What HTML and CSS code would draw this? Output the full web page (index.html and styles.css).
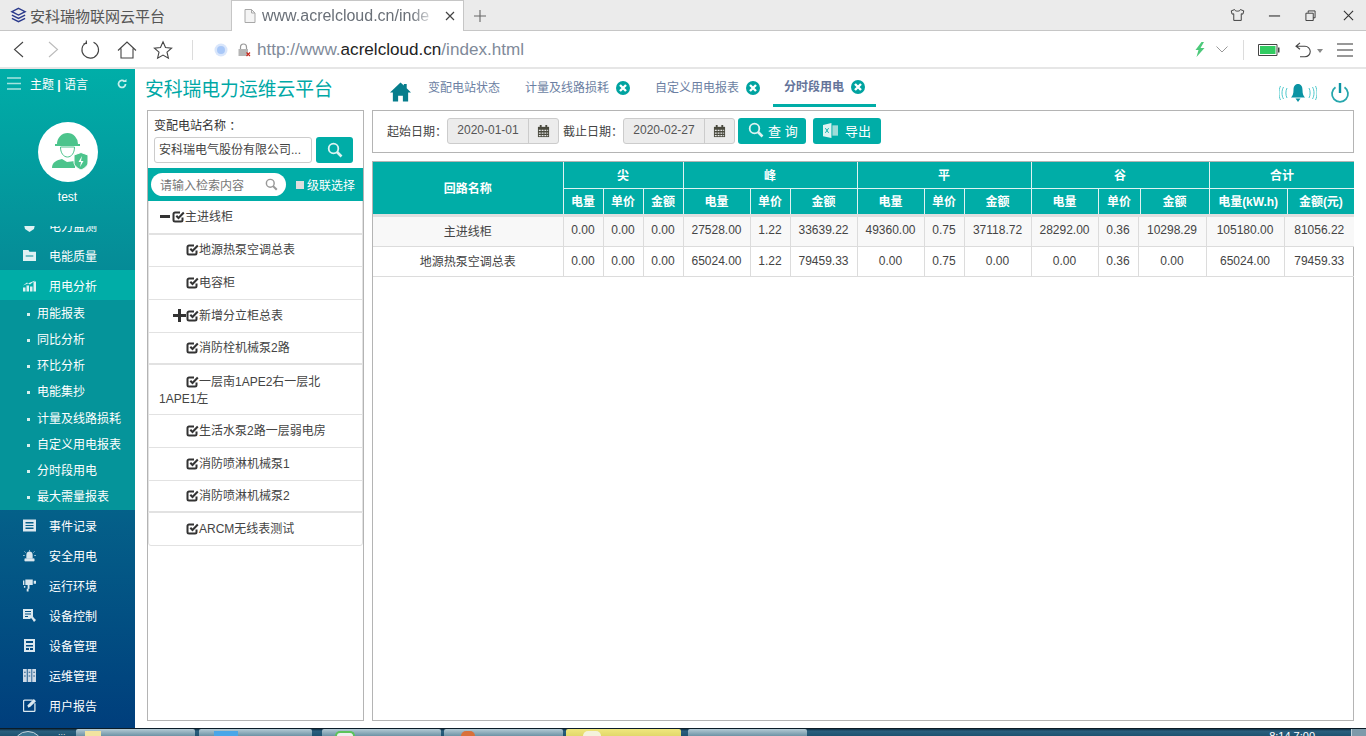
FILE: index.html
```html
<!DOCTYPE html>
<html>
<head>
<meta charset="utf-8">
<title>安科瑞物联网云平台</title>
<link rel="stylesheet" href="styles.css">
</head>
<body>
<svg class="defs" width="0" height="0">
	<symbol id="chk" viewBox="0 0 13 13">
		<path d="M10.500 7.500v2.500a1.500 1.500 0 0 1-1.500 1.500H3A1.500 1.500 0 0 1 1.500 10V4A1.500 1.500 0 0 1 3 2.500h5" fill="none" stroke="currentColor" stroke-width="2"/>
		<path d="M4.300 5.700l2.200 2.200L11.800 2.600" fill="none" stroke="currentColor" stroke-width="2.100"/>
	</symbol>
	<symbol id="cal" viewBox="0 0 14 14">
		<path d="M1 2h12v11H1z" fill="#4a4a3e"/>
		<path d="M3 0h2v3H3zM9 0h2v3H9z" fill="#4a4a3e"/>
		<path d="M2 5h2v1.500H2zM5 5h2v1.500H5zM8 5h2v1.500H8zM11 5h1v1.500h-1zM2 8h2v1.500H2zM5 8h2v1.500H5zM8 8h2v1.500H8zM11 8h1v1.500h-1zM2 10.700h2v1.300H2zM5 10.700h2v1.300H5zM8 10.700h2v1.300H8zM11 10.700h1v1.300h-1z" fill="#e8e8e8"/>
	</symbol>
	<symbol id="mag" viewBox="0 0 16 16">
		<circle cx="6.500" cy="6.500" r="4.800" fill="none" stroke="currentColor" stroke-width="1.800"/>
		<path d="M10 10l4.500 4.500" stroke="currentColor" stroke-width="2.600"/>
	</symbol>
	<symbol id="closex" viewBox="0 0 14 14">
		<circle cx="7" cy="7" r="7" fill="#00a3a0"/>
		<path d="M4 4l6 6M10 4l-6 6" stroke="#fff" stroke-width="2.400"/>
	</symbol>
</svg>

<div class="tabbar">
	<div class="tab">
		<svg class="tab_logo" viewBox="0 0 18 18"><path d="M9 1.500L16 5 9 8.500 2 5z" fill="none" stroke="#2b3a8c" stroke-width="1.500"/><path d="M2 8.500l7 3.500 7-3.500M2 12l7 3.500L16 12" fill="none" stroke="#2b3a8c" stroke-width="1.500"/></svg>
		<span>安科瑞物联网云平台</span>
	</div>
	<div class="tab tab_on">
		<svg class="tab_page" viewBox="0 0 12 14"><path d="M1 .5h6.500L11 4v9.500H1z" fill="#f4f4f4" stroke="#a8a8a8"/><path d="M7.500 .5V4H11" fill="none" stroke="#a8a8a8"/></svg>
		<span class="tab_url">www.acrelcloud.cn/inde</span>
		<svg class="tab_x" viewBox="0 0 10 10"><path d="M1 1l8 8M9 1L1 9" stroke="#444" stroke-width="1.200"/></svg>
	</div>
	<svg class="tab_plus" viewBox="0 0 14 14"><path d="M7 1v12M1 7h12" stroke="#666" stroke-width="1.100"/></svg>
	<div class="win_btns">
		<svg viewBox="0 0 18 16" class="w_shirt"><path d="M5.500 1.500L1.500 3l1 4 2-.5v8h9v-8l2 .5 1-4-4-1.500c-.5 2.500-6.500 2.500-7 0z" fill="none" stroke="#333" stroke-width="1.100"/></svg>
		<svg viewBox="0 0 14 14" class="w_min"><path d="M1 7.500h12" stroke="#333" stroke-width="1.200"/></svg>
		<svg viewBox="0 0 12 12" class="w_max"><path d="M3.500 3V1h7.500v7.500H9" fill="none" stroke="#333"/><path d="M1 3.500h8v8H1z" fill="none" stroke="#333"/></svg>
		<svg viewBox="0 0 12 12" class="w_close"><path d="M1 1l10 10M11 1L1 11" stroke="#333" stroke-width="1.200"/></svg>
	</div>
</div>

<div class="toolbar">
	<svg class="t_back" viewBox="0 0 11 17"><path d="M10 1L1.500 8.500 10 16" fill="none" stroke="#444" stroke-width="1.100"/></svg>
	<svg class="t_fwd" viewBox="0 0 11 17"><path d="M1 1l8.500 7.500L1 16" fill="none" stroke="#bbb" stroke-width="1.100"/></svg>
	<svg class="t_reload" viewBox="0 0 20 20"><path d="M6 2.700a8.300 8.300 0 1 0 7.500-.5M6.300 .5l.2 3-3 .2" fill="none" stroke="#444" stroke-width="1.100"/></svg>
	<svg class="t_home" viewBox="0 0 20 20"><path d="M1 10.500L10 2l9 8.500M4 8.500V18h12V8.500" fill="none" stroke="#444" stroke-width="1.100"/></svg>
	<svg class="t_star" viewBox="0 0 20 20"><path d="M10 1.800l2.500 5.700 6.100.6-4.600 4.100 1.400 6L10 15.100l-5.400 3.100 1.400-6-4.600-4.100 6.100-.6z" fill="none" stroke="#444" stroke-width="1.100"/></svg>
	<div class="t_sep"></div>
	<svg class="t_shield" viewBox="0 0 14 14"><circle cx="7" cy="7" r="6.500" fill="#d9e6fb"/><circle cx="7" cy="7" r="4" fill="#a9c8f8"/></svg>
	<svg class="t_lock" viewBox="0 0 14 14"><path d="M3.500 6V4a3 3 0 0 1 6 0v2" fill="none" stroke="#999" stroke-width="1.200"/><path d="M1.500 6h9.500v7H1.500z" fill="#b5b5b5"/><path d="M9.500 9.500l3.500 3.500M13 9.500L9.500 13" stroke="#c8281e" stroke-width="1.200"/></svg>
	<div class="url">http://www.<b>acrelcloud.cn</b>/index.html</div>
	<div class="t_right">
		<svg class="t_bolt" viewBox="0 0 10 15"><path d="M6.500 0L.5 8h3L1.500 15 9.500 6H5.500L9 0z" fill="#4cc97a"/></svg>
		<svg class="t_down" viewBox="0 0 12 7"><path d="M.5 .5L6 6l5.500-5.500" fill="none" stroke="#999"/></svg>
		<div class="t_sep t_sep2"></div>
		<svg class="t_batt" viewBox="0 0 22 12"><path d="M.5 .5h18.500v11H.5z" fill="none" stroke="#444"/><path d="M2 2h15.500v8H2z" fill="#32cc62"/><path d="M20 3.500h1.500v5H20z" fill="#444"/></svg>
		<svg class="t_undo" viewBox="0 0 16 16"><path d="M5 .8L1 4.300l4 3M1 4.300h9a4.800 4.800 0 0 1 0 10.500H5" fill="none" stroke="#444" stroke-width="1.100"/></svg>
		<svg class="t_caret" viewBox="0 0 6 4"><path d="M0 0h6L3 4z" fill="#888"/></svg>
		<svg class="t_menu" viewBox="0 0 16 14"><path d="M0 1h16M0 7h16M0 13h16" stroke="#333" stroke-width="1.100"/></svg>
	</div>
</div>

<div class="page">
	<div class="sidebar">
		<div class="side_top">
			<svg class="burger" viewBox="0 0 14 14"><path d="M0 1h14M0 6.500h14M0 12h14" stroke="#a6e4df" stroke-width="1.500"/></svg>
			<span class="theme">主题 <b>|</b> 语言</span>
			<svg class="refresh" viewBox="0 0 10 10"><path d="M8.500 5a3.500 3.500 0 1 1-1-2.500" fill="none" stroke="#c6efec" stroke-width="1.800"/><path d="M6 3h3.500V0z" fill="#c6efec"/></svg>
		</div>
		<div class="avatar">
			<svg viewBox="0 0 40 40" width="40" height="40">
				<path d="M9 12a10.500 11 0 0 1 21 0h2v2H7v-2z" fill="#4cc48c"/>
				<path d="M12.500 15h14c0 6-3 10-7 10s-7-4-7-10z" fill="none" stroke="#4cc48c" stroke-width="1"/>
				<path d="M4 36c0-6 5-8 10-9l5 3 8-1v7z" fill="#4cc48c"/>
				<path d="M26 23l7-2.500 7 2.500v7c0 4-3 6-7 8-4-2-7-4-7-8z" fill="#4cc48c" stroke="#fff"/>
				<path d="M34 24l-3.500 6h2.500l-1 5 3.500-6H33z" fill="#fff"/>
			</svg>
		</div>
		<div class="user">test</div>
		<div class="menu">
			<div class="item item_cut"><svg class="mi" viewBox="0 0 13 13"><path d="M0 1h13l-2 9-4.500 3L2 10z" fill="#dff1f3"/></svg>电力监测</div>
			<div class="item"><svg class="mi" viewBox="0 0 12 12"><path d="M0 1h5l1 1.500h6V11H0zM2.500 6h7v1h-7z" fill="#dff1f3" fill-rule="evenodd"/></svg>电能质量</div>
			<div class="item item_on"><svg class="mi" viewBox="0 0 13 12"><path d="M0 8h2.500v4H0zM3.500 6H6v6H3.500zM7 7h2.500v5H7zM10.500 2H13v10h-2.500zM0 6l4-3 3 2 5-4" fill="#dff1f3"/></svg>用电分析</div>
			<div class="subs">
				<div class="sub">用能报表</div>
				<div class="sub">同比分析</div>
				<div class="sub">环比分析</div>
				<div class="sub">电能集抄</div>
				<div class="sub">计量及线路损耗</div>
				<div class="sub">自定义用电报表</div>
				<div class="sub">分时段用电</div>
				<div class="sub">最大需量报表</div>
			</div>
			<div class="item"><svg class="mi" viewBox="0 0 13 12"><path d="M0 0h13v12H0zM2.500 2.500v1.500h8V2.500zM2.500 5.500v1h8v-1zM2.500 8v1.500h8V8z" fill="#dbe8ef" fill-rule="evenodd"/></svg>事件记录</div>
			<div class="item"><svg class="mi" viewBox="0 0 14 12"><path d="M4 5a3 3 0 0 1 6 0v4H4zM2 9.500h10V12H2zM7 0v1.500M1.500 1.500l1.500 1.500M12.500 1.500L11 3M0 6h2M12 6h2" fill="#dbe8ef" stroke="#dbe8ef" stroke-width=".7"/></svg>安全用电</div>
			<div class="item"><svg class="mi" viewBox="0 0 14 13"><path d="M0 1h1.500v5H0zM2.500 0h8v6h-8zM11.500 1.500H14v3h-2.500zM5 6h2v4H5zM4 10h2v3H4zM1 7h1.500v2H1z" fill="#dbe8ef"/></svg>运行环境</div>
			<div class="item"><svg class="mi" viewBox="0 0 13 13"><path d="M0 0h10v7l-3 3H0zM2 2v1h6V2zM2 4.500v1h6v-1zM2 7v1h3V7z" fill="#dbe8ef" fill-rule="evenodd"/><path d="M7 8l2-2 2 3 2 2-2 2-2-3z" fill="#dbe8ef"/></svg>设备控制</div>
			<div class="item"><svg class="mi" viewBox="0 0 11 13"><path d="M0 0h11v13H0zM2 2v2h7V2zM2 6v1.500h7V6zM2 9v2h3V9zM6 9v2h3V9z" fill="#dbe8ef" fill-rule="evenodd"/></svg>设备管理</div>
			<div class="item"><svg class="mi" viewBox="0 0 12 12"><path d="M0 0h3.500v12H0zM4.300 0h3.500v12H4.300zM8.500 0H12v12H8.500z" fill="#cdd9e6"/><path d="M1 3h1.500M5.200 3h1.500M9.500 3H11M1 6.500h1.500M5.200 6.500h1.500M9.500 6.500H11" stroke="#2a5d88"/></svg>运维管理</div>
			<div class="item"><svg class="mi" viewBox="0 0 12 12"><path d="M9 1H1.500a1 1 0 0 0-1 1v8.500a1 1 0 0 0 1 1H10a1 1 0 0 0 1-1V4" fill="none" stroke="#dbe8ef" stroke-width="1.200"/><path d="M4 6l1 2 2-1 5-5-2-2z" fill="#dbe8ef"/></svg>用户报告</div>
		</div>
	</div>

	<div class="left">
		<h1>安科瑞电力运维云平台</h1>
		<div class="tree_box">
			<div class="st_label">变配电站名称 ：</div>
			<div class="st_row">
				<div class="st_input">安科瑞电气股份有限公司...</div>
				<div class="st_btn"><svg viewBox="0 0 16 16"><use href="#mag"/></svg></div>
			</div>
			<div class="filter">
				<div class="filter_in"><span>请输入检索内容</span><svg viewBox="0 0 16 16"><use href="#mag"/></svg></div>
				<span class="filter_box"></span><span class="filter_txt">级联选择</span>
			</div>
			<div class="node"><svg class="fold" viewBox="0 0 13 13"><path d="M1 5h10v3H1z"/></svg><svg class="chk"><use href="#chk"/></svg>主进线柜</div>
			<div class="node node_thick"><span class="ind"></span><svg class="chk"><use href="#chk"/></svg>地源热泵空调总表</div>
			<div class="node"><span class="ind"></span><svg class="chk"><use href="#chk"/></svg>电容柜</div>
			<div class="node"><span class="ind2"></span><svg class="fold" viewBox="0 0 13 13"><path d="M5 0h3v5h5v3H8v5H5V8H0V5h5z"/></svg><svg class="chk"><use href="#chk"/></svg>新增分立柜总表</div>
			<div class="node node_short"><span class="ind"></span><svg class="chk"><use href="#chk"/></svg>消防栓机械泵2路</div>
			<div class="node node_thick node_wrap"><span class="ind"></span><svg class="chk"><use href="#chk"/></svg>一层南1APE2右一层北 1APE1左</div>
			<div class="node"><span class="ind"></span><svg class="chk"><use href="#chk"/></svg>生活水泵2路一层弱电房</div>
			<div class="node"><span class="ind"></span><svg class="chk"><use href="#chk"/></svg>消防喷淋机械泵1</div>
			<div class="node node_short"><span class="ind"></span><svg class="chk"><use href="#chk"/></svg>消防喷淋机械泵2</div>
			<div class="node node_thick node_last"><span class="ind"></span><svg class="chk"><use href="#chk"/></svg>ARCM无线表测试</div>
		</div>
	</div>

	<div class="main">
		<div class="tabs">
			<svg class="home" viewBox="0 0 22 20"><path d="M11 0L0 10.500h3V20h5.500v-6h5v6H19v-9.500h3L17.500 6V1.500h-3v1.800z" fill="#067d8c"/></svg>
			<div class="p_tab p_tab1">变配电站状态</div>
			<div class="p_tab p_tab2">计量及线路损耗<svg class="cx"><use href="#closex"/></svg></div>
			<div class="p_tab p_tab3">自定义用电报表<svg class="cx"><use href="#closex"/></svg></div>
			<div class="p_tab p_tab_on">分时段用电<svg class="cx"><use href="#closex"/></svg></div>
			<div class="tabs_r">
				<svg class="bell" viewBox="0 0 38 18"><path d="M19 0c-3 0-4.500 2.500-4.500 6 0 4-1 6-2.500 7.500h14C24.500 12 23.500 10 23.500 6c0-3.500-1.500-6-4.500-6zM16.500 14.500h5L19 18z" fill="#0a93a3"/><path d="M8 4c-1.500 3-1.500 7 0 10M4.500 3c-2 3.500-2 8.500 0 12M1.500 2c-2 4-2 10 0 14M30 4c1.500 3 1.500 7 0 10M33.500 3c2 3.500 2 8.500 0 12M36.500 2c2 4 2 10 0 14" fill="none" stroke="#4fc9cc" stroke-width="1"/></svg>
				<svg class="power" viewBox="0 0 20 20"><path d="M5.500 4.300a8 8 0 1 0 9 0" fill="none" stroke="#26a7ad" stroke-width="1.800"/><path d="M8.800 0h2.400v10H8.800z" fill="#0a93a3"/></svg>
			</div>
		</div>
		<div class="query">
			<span class="q_lab">起始日期：</span>
			<div class="date"><span>2020-01-01</span><i><svg viewBox="0 0 14 14"><use href="#cal"/></svg></i></div>
			<span class="q_lab q_lab2">截止日期：</span>
			<div class="date"><span>2020-02-27</span><i><svg viewBox="0 0 14 14"><use href="#cal"/></svg></i></div>
			<div class="btn btn_q"><svg viewBox="0 0 16 16"><use href="#mag"/></svg>查 询</div>
			<div class="btn btn_x">
				<svg viewBox="0 0 16 16"><path d="M0 2l9-2v16l-9-2z" fill="#dff3f2"/><path d="M10 2.500h6v11h-6z" fill="#9fdcd8"/><path d="M2.500 5.500l3.500 5M6 5.500l-3.500 5" stroke="#00ada7" stroke-width="1"/></svg>
				导出
			</div>
		</div>
		<div class="report">
			<table class="thead">
				<colgroup><col><col><col><col><col><col><col><col><col><col><col><col><col><col><col></colgroup>
				<tr class="top">
					<th rowspan="2" class="name">回路名称</th>
					<th colspan="3">尖</th>
					<th colspan="3">峰</th>
					<th colspan="3">平</th>
					<th colspan="3">谷</th>
					<th colspan="2">合计</th>
				</tr>
				<tr>
					<th>电量</th><th>单价</th><th>金额</th>
					<th>电量</th><th>单价</th><th>金额</th>
					<th>电量</th><th>单价</th><th>金额</th>
					<th>电量</th><th>单价</th><th>金额</th>
					<th>电量(kW.h)</th><th>金额(元)</th>
				</tr>
			</table>
			<table class="tbody">
				<colgroup><col><col><col><col><col><col><col><col><col><col><col><col><col><col><col></colgroup>
				<tr class="odd">
					<td>主进线柜</td><td>0.00</td><td>0.00</td><td>0.00</td>
					<td>27528.00</td><td>1.22</td><td>33639.22</td>
					<td>49360.00</td><td>0.75</td><td>37118.72</td>
					<td>28292.00</td><td>0.36</td><td>10298.29</td>
					<td>105180.00</td><td>81056.22</td>
				</tr>
				<tr>
					<td>地源热泵空调总表</td><td>0.00</td><td>0.00</td><td>0.00</td>
					<td>65024.00</td><td>1.22</td><td>79459.33</td>
					<td>0.00</td><td>0.75</td><td>0.00</td>
					<td>0.00</td><td>0.36</td><td>0.00</td>
					<td>65024.00</td><td>79459.33</td>
				</tr>
			</table>
		</div>
	</div>
</div>

<div class="taskbar">
	<div class="orb"></div>
	<div class="dots">...</div>
	<div class="task task1"><i class="t_ico ico_folder"></i></div>
	<div class="task task2"><i class="t_ico ico_blue"></i></div>
	<div class="task task3"><i class="t_ico ico_green"></i></div>
	<div class="task task4"><i class="t_ico ico_orange"></i></div>
	<div class="task task5"><i class="t_ico ico_white"></i></div>
	<div class="task task6"></div>
	<div class="clock">8:14 7:00</div>
	<div class="showdesk"></div>
</div>
</body>
</html>
```

FILE: styles.css
```css
* {
	box-sizing: border-box;
}
html, body {
	margin: 0;
	height: 736px;
	overflow: hidden;
}
body {
	font-family: "Liberation Sans", "Noto Sans CJK SC", sans-serif;
	font-size: 12px;
	color: #333;
	background: #fff;
}
.defs {
	display: block;
	height: 0;
}

/* browser tabs */
.tabbar {
	height: 31px;
	background: #ebebeb;
	border-bottom: 1px solid #c6c6c6;
	display: flex;
	align-items: stretch;
}
.tab {
	width: 231px;
	display: flex;
	align-items: center;
	padding-left: 10px;
	font-size: 15px;
	color: #555;
}
.tab_logo {
	width: 17px;
	height: 17px;
	margin-right: 3px;
}
.tab_on {
	width: 233px;
	height: 31px;
	background: #fff;
	border: 1px solid #c6c6c6;
	border-bottom: 0;
	padding-left: 12px;
}
.tab_page {
	width: 12px;
	height: 14px;
	margin-right: 6px;
}
.tab_url {
	width: 175px;
	overflow: hidden;
	white-space: nowrap;
	font-size: 16px;
	color: #6a7078;
	-webkit-mask-image: linear-gradient(90deg, #000 85%, transparent 100%);
	mask-image: linear-gradient(90deg, #000 85%, transparent 100%);
}
.tab_x {
	width: 10px;
	height: 10px;
	margin-left: 8px;
}
.tab_plus {
	width: 14px;
	height: 14px;
	margin: 9px 0 0 9px;
}
.win_btns {
	margin-left: auto;
	display: flex;
	align-items: center;
	padding-right: 12px;
}
.w_shirt {
	width: 15px;
	height: 14px;
	margin-right: 23px;
}
.w_min {
	width: 13px;
	height: 13px;
	margin-right: 24px;
}
.w_max {
	width: 11px;
	height: 11px;
	margin-right: 27px;
}
.w_close {
	width: 11px;
	height: 11px;
}

/* browser toolbar */
.toolbar {
	height: 38px;
	border-bottom: 2px solid #e6e6e6;
	display: flex;
	align-items: center;
	padding: 1px 0 0 13px;
}
.toolbar svg {
	flex: none;
}
.t_back, .t_fwd {
	width: 11px;
	height: 17px;
}
.t_fwd {
	margin-left: 24px;
}
.t_reload {
	width: 20px;
	height: 20px;
	margin-left: 21px;
}
.t_home {
	width: 20px;
	height: 20px;
	margin-left: 17px;
}
.t_star {
	width: 20px;
	height: 20px;
	margin-left: 16px;
}
.t_sep {
	width: 1px;
	height: 20px;
	background: #dcdcdc;
	margin-left: 19px;
}
.t_shield {
	width: 14px;
	height: 14px;
	margin-left: 21px;
}
.t_lock {
	width: 14px;
	height: 14px;
	margin-left: 9px;
}
.url {
	margin-left: 6px;
	font-size: 17.100px;
	color: #808a99;
}
.url b {
	font-weight: normal;
	color: #222;
}
.t_right {
	margin-left: auto;
	display: flex;
	align-items: center;
	padding-right: 13px;
}
.t_bolt {
	width: 10px;
	height: 15px;
}
.t_down {
	width: 12px;
	height: 7px;
	margin-left: 11px;
}
.t_sep2 {
	margin-left: 15px;
}
.t_batt {
	width: 22px;
	height: 12px;
	margin-left: 14px;
}
.t_undo {
	width: 16px;
	height: 16px;
	margin-left: 15px;
}
.t_caret {
	width: 6px;
	height: 4px;
	margin: 2px 0 0 6px;
}
.t_menu {
	width: 16px;
	height: 14px;
	margin-left: 14px;
}

/* page */
.page {
	height: 659px;
	display: flex;
}
.sidebar {
	width: 135px;
	flex: none;
	color: #fff;
	background: linear-gradient(180deg, #00aea8 0%, #058e98 28%, #05688c 60%, #003e7c 100%);
	display: flex;
	flex-direction: column;
}
.side_top {
	height: 31px;
	display: flex;
	align-items: center;
	padding: 0 8px 2px 7px;
}
.burger {
	width: 14px;
	height: 14px;
}
.theme {
	margin-left: 9px;
}
.refresh {
	width: 10px;
	height: 10px;
	margin-left: auto;
}
.avatar {
	width: 60px;
	height: 60px;
	margin: 22px auto 0;
	background: #fff;
	border-radius: 50%;
	display: flex;
	align-items: center;
	justify-content: center;
}
.user {
	text-align: center;
	margin-top: 7px;
	height: 17px;
	line-height: 17px;
}
.menu {
	height: 502px;
	margin-top: 20px;
	overflow: hidden;
}
.item {
	height: 30px;
	display: flex;
	align-items: center;
	padding-left: 23px;
}
.item_cut {
	margin-top: -16px;
}
.mi {
	width: 13px;
	height: 13px;
	margin-right: 13px;
	flex: none;
}
.item_on {
	background: #00ada7;
	box-shadow: 0 2px 2px #058191;
}
.subs {
	background: #05949a;
	height: 210px;
	padding-top: 1px;
}
.sub {
	height: 26.150px;
	line-height: 26px;
	padding-left: 37px;
	position: relative;
}
.sub:before {
	content: "";
	position: absolute;
	left: 27px;
	top: 12px;
	width: 3px;
	height: 3px;
	background: #d6f0ee;
}

/* tree */
.left {
	width: 229px;
	flex: none;
	padding-left: 12px;
}
h1 {
	margin: 8px 0 0 -2px;
	height: 33px;
	font-size: 18.800px;
	font-weight: normal;
	color: #00a8a6;
	line-height: 26px;
}
.tree_box {
	width: 217px;
	height: 611px;
	border: 1px solid #b4b4b4;
	background: #fff;
}
.st_label {
	margin: 7px 0 0 6px;
	height: 17px;
	line-height: 17px;
}
.st_row {
	display: flex;
	margin: 2px 0 5px 6px;
}
.st_input {
	width: 158px;
	height: 26px;
	line-height: 24px;
	border: 1px solid #ccc;
	border-radius: 3px;
	padding-left: 4px;
	white-space: nowrap;
	overflow: hidden;
	color: #444;
}
.st_btn {
	width: 37px;
	height: 26px;
	margin-left: 4px;
	background: #00ada7;
	border-radius: 3px;
	color: #dff3f2;
	display: flex;
	align-items: center;
	justify-content: center;
}
.st_btn svg {
	width: 16px;
	height: 16px;
}
.filter {
	height: 33px;
	background: #00ada7;
	display: flex;
	align-items: center;
	padding-left: 3px;
	color: #fff;
}
.filter_in {
	width: 135px;
	height: 23px;
	background: #fff;
	border-radius: 12px;
	display: flex;
	align-items: center;
	padding: 0 8px 1px 9px;
	color: #777;
}
.filter_in svg {
	width: 13px;
	height: 13px;
	margin-left: auto;
	color: #999;
}
.filter_box {
	width: 8px;
	height: 8px;
	background: #dedede;
	margin: 0 3px 0 10px;
}
.node {
	height: 33px;
	line-height: 32px;
	border: 1px solid #e2e2e2;
	border-top: 0;
	padding: 0 15px 0 10px;
	color: #444;
}
.node_thick {
	border-top: 1px solid #e2e2e2;
	line-height: 31px;
}
.node_short {
	height: 31px;
	line-height: 30px;
}
.node_wrap {
	height: 51px;
	line-height: 17px;
	padding-top: 9px;
}
.node_last {
	height: 34px;
	line-height: 32px;
	border-radius: 0 0 3px 3px;
}
.ind {
	display: inline-block;
	width: 27px;
}
.ind2 {
	display: inline-block;
	width: 14px;
}
.fold {
	width: 13px;
	height: 13px;
	vertical-align: -2px;
	fill: #333;
}
.chk {
	width: 13px;
	height: 13px;
	vertical-align: -2px;
	color: #333;
}

/* right part */
.main {
	flex: 1;
	min-width: 0;
	padding: 0 12px 0 8px;
}
.tabs {
	height: 41px;
	display: flex;
	align-items: flex-start;
	color: #6c7fa3;
}
.home {
	width: 21px;
	height: 20px;
	margin: 13px 0 0 18px;
	flex: none;
}
.p_tab {
	height: 38px;
	line-height: 36px;
	padding: 0 11px;
	display: flex;
	align-items: center;
	white-space: nowrap;
}
.p_tab1 {
	margin: 0 3px 0 6px;
}
.p_tab2 {
	margin-right: 3px;
}
.p_tab3 {
	margin-right: 2px;
}
.p_tab .cx {
	width: 14px;
	height: 14px;
	margin-left: 7px;
}
.p_tab_on {
	font-weight: bold;
	border-bottom: 3px solid #00ada7;
	color: #64749a;
}
.tabs_r {
	margin-left: auto;
	display: flex;
	align-items: center;
	padding: 14px 4px 0 0;
}
.bell {
	width: 38px;
	height: 18px;
}
.power {
	width: 20px;
	height: 20px;
	margin-left: 13px;
}
.query {
	height: 43px;
	border: 1px solid #b4b4b4;
	display: flex;
	align-items: center;
	padding: 0 0 0 14px;
}
.q_lab {
	color: #444;
	margin-top: -2px;
}
.q_lab2 {
	margin-left: 4px;
}
.date {
	width: 112px;
	height: 26px;
	display: flex;
	background: #ececec;
	border: 1px solid #ccc;
	border-radius: 3px;
	color: #555;
	margin-top: -1px;
}
.date span {
	width: 80px;
	text-align: center;
	line-height: 22px;
}
.date i {
	flex: 1;
	border-left: 1px solid #ccc;
	display: flex;
	align-items: center;
	justify-content: center;
}
.date svg {
	width: 13px;
	height: 13px;
}
.btn {
	height: 26px;
	margin-top: -1px;
	background: #00ada7;
	border-radius: 3px;
	color: #fff;
	font-size: 13px;
	display: flex;
	align-items: center;
	margin-left: 7px;
	padding: 0 0 2px 10px;
}
.btn_q {
	width: 68px;
	margin-left: 3px;
}
.btn_q svg {
	width: 16px;
	height: 16px;
	margin-right: 4px;
	color: #dff3f2;
}
.btn_x {
	width: 68px;
}
.btn_x svg {
	width: 15px;
	height: 15px;
	margin-right: 7px;
}
.report {
	height: 560px;
	margin-top: 8px;
	border: 1px solid #b4b4b4;
}
table {
	border-collapse: collapse;
	table-layout: fixed;
	width: 981px;
}
.thead th {
	height: 26.500px;
	padding: 0 0 2px;
	background: #00ada7;
	color: #fff;
	font-weight: bold;
	text-align: center;
	border: 1px solid #dff3f2;
	border-top: 0;
	border-left: 0;
}
.thead .top th {
	padding-bottom: 2px;
}
.thead .top .name {
	padding-bottom: 0;
}
.thead th:last-child {
	border-right: 0;
}
.thead {
	border-bottom: 3px solid #e0e0e0;
}
.thead tr:last-child th {
	border-bottom: 0;
}
.tbody td {
	height: 30px;
	padding: 0 0 2px;
	text-align: center;
	border: 1px solid #dcdcdc;
	border-top: 0;
	border-left: 0;
	color: #444;
}
.tbody td:last-child {
	border-right: 0;
}
.odd td {
	background: #f8f8f8;
}
.thead col:nth-child(1), .tbody col:nth-child(1) { width: 190px; }
.thead col:nth-child(2), .tbody col:nth-child(2),
.thead col:nth-child(3), .tbody col:nth-child(3),
.thead col:nth-child(4), .tbody col:nth-child(4) { width: 40px; }
.thead col:nth-child(5), .tbody col:nth-child(5) { width: 67px; }
.thead col:nth-child(6), .tbody col:nth-child(6) { width: 40px; }
.thead col:nth-child(7), .tbody col:nth-child(7) { width: 67px; }
.thead col:nth-child(8), .tbody col:nth-child(8) { width: 67px; }
.thead col:nth-child(9), .tbody col:nth-child(9) { width: 40px; }
.thead col:nth-child(10), .tbody col:nth-child(10) { width: 67px; }
.thead col:nth-child(11) { width: 67px; }
.thead col:nth-child(12) { width: 42px; }
.thead col:nth-child(13) { width: 69px; }
.thead col:nth-child(14) { width: 78px; }
.thead col:nth-child(15) { width: 67px; }
.tbody col:nth-child(11) { width: 67px; }
.tbody col:nth-child(12) { width: 40px; }
.tbody col:nth-child(13) { width: 68px; }
.tbody col:nth-child(14) { width: 78px; }
.tbody col:nth-child(15) { width: 70px; }

/* windows taskbar, only its top edge is in view */
.taskbar {
	height: 8px;
	background: linear-gradient(180deg, #0f2f44 0%, #2a5f7e 30%, #1d5270 100%);
	border-top: 1px solid #0b1c28;
	display: flex;
	overflow: hidden;
}
.orb {
	width: 30px;
	height: 30px;
	margin: 2px 0 0 13px;
	border: 1px solid #c4d4dc;
	border-radius: 50%;
	background: #3c7692;
	flex: none;
}
.dots {
	width: 33px;
	color: #ddd;
	font-size: 9px;
	line-height: 0;
	padding: 3px 0 0 15px;
	flex: none;
}
.task {
	height: 7px;
	margin-right: 4px;
	background: linear-gradient(180deg, #b4cad4, #6d93a6);
	border-radius: 2px 2px 0 0;
	flex: none;
	padding-top: 2px;
}
.t_ico {
	display: block;
	height: 5px;
}
.task1 { width: 119px; }
.task2 { width: 113px; margin-right: 10px; }
.task3 { width: 119px; margin-right: 3px; }
.task4 { width: 119px; margin-right: 3px; }
.task5 { width: 115px; margin-right: 7px; background: linear-gradient(180deg, #f0e77e, #e2d86a); }
.task6 { width: 119px; }
.ico_folder { width: 16px; margin-left: 9px; background: #f2e3a0; }
.ico_blue { width: 24px; margin-left: 15px; background: #4aa6e8; }
.ico_green { width: 20px; margin-left: 13px; border: 2px solid #5cc45a; border-bottom: 0; border-radius: 10px 10px 0 0; background: #eee; }
.ico_orange { width: 14px; margin-left: 17px; background: #d9703a; border-radius: 7px 7px 0 0; }
.ico_white { width: 18px; margin-left: 17px; background: #f4f2dc; border-radius: 9px 9px 0 0; }
.clock {
	margin-left: auto;
	color: #fff;
	font-size: 11px;
	line-height: 14px;
	margin-right: 36px;
}
.showdesk {
	width: 15px;
	height: 8px;
	background: #7d9aaa;
	border-left: 1px solid #c4d4dc;
	flex: none;
}
```
